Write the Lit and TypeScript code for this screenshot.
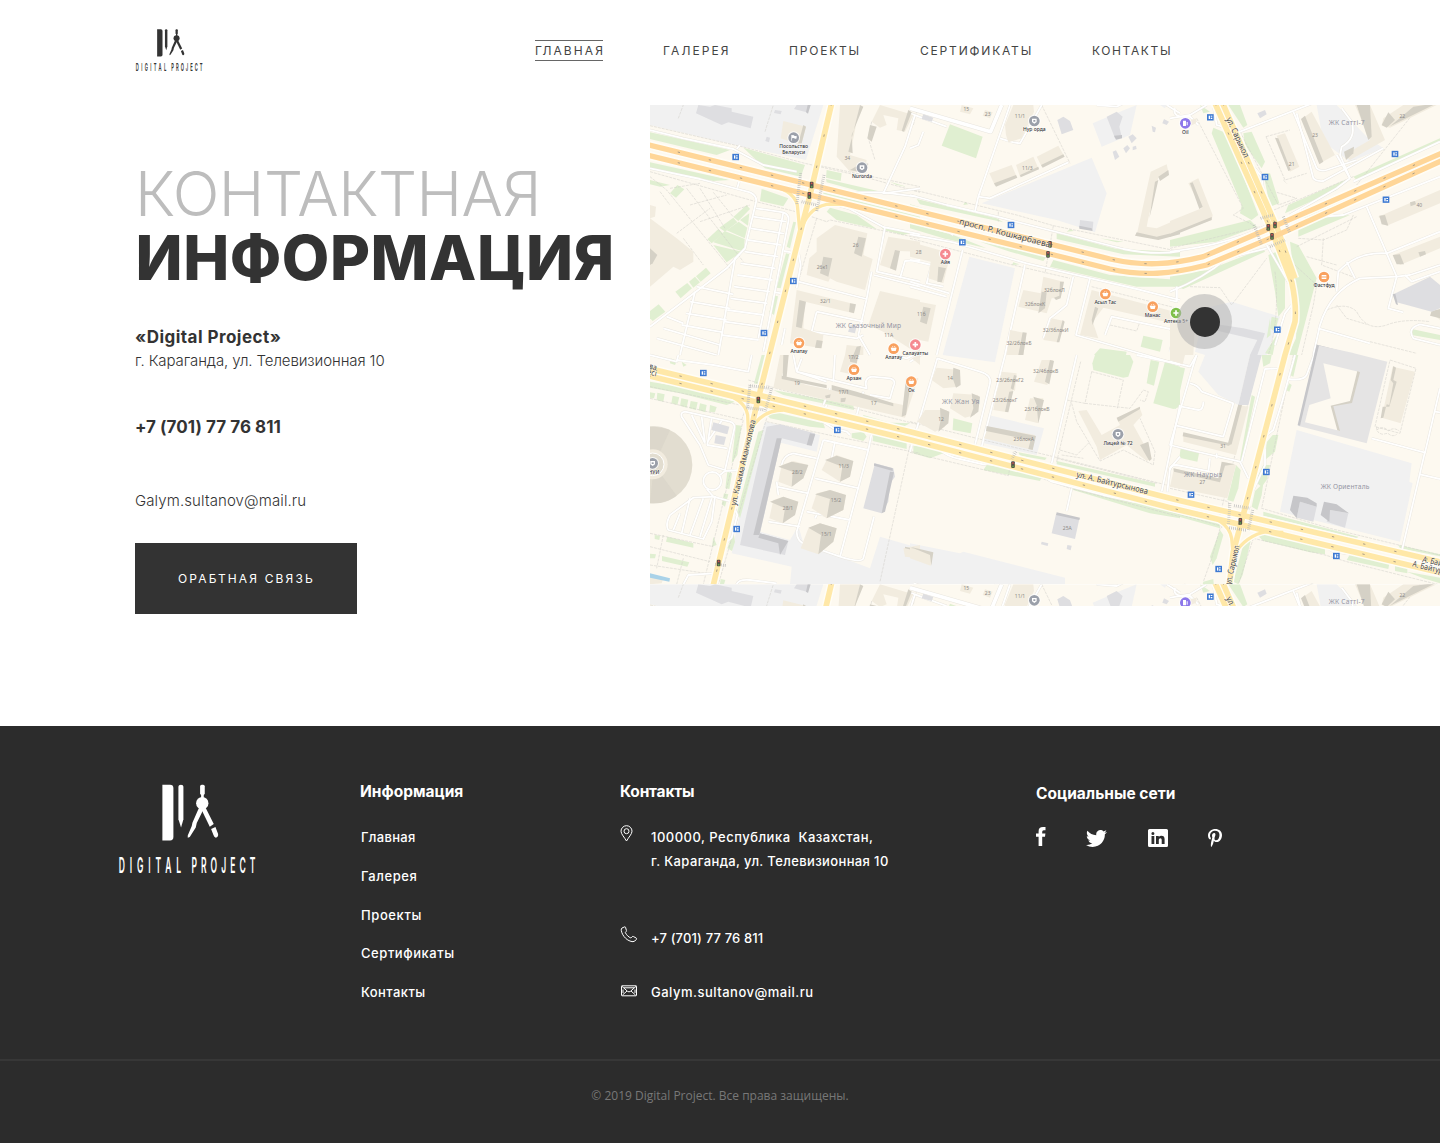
import { LitElement, html, svg, css } from "lit";
import { customElement, property } from "lit/decorators.js";

/* Map geometry is in thirds of a CSS pixel; it is split into six blocks of 780 x 750 units. */
type Block = {
  x: number; y: number;
  zones?: string[]; greens?: string[]; ways?: string[]; wide?: string[]; paths?: string[];
  floors?: string[]; shades?: string[]; greys?: string[]; greyShades?: string[];
};

const BLOCKS: Block[] = [
  {
    x: 0, y: 0,
    zones: ["0,0 520,0 468,165 280,125 0,60"],
    greens: [
      "0,82 240,135 200,150 0,102", "0,172 240,225 190,228 0,190", "280,128 465,180 452,215 345,190",
      "335,252 415,280 400,304 330,288", "530,195 575,205 572,228 528,218", "528,222 700,262 640,262 530,232",
      "540,308 620,330 680,372 560,345 530,320", "430,350 438,352 420,430 410,425", "408,445 418,448 392,550 380,548",
      "375,572 384,574 372,630 358,620", "0,225 60,240 30,245 0,238", "82,240 103,253 78,278 60,265",
      "290,300 300,312 265,348 250,336", "250,338 262,352 225,380 208,368", "205,372 220,386 185,415 172,403",
      "298,325 294,362 270,345", "266,350 292,368 284,400 230,376", "224,378 284,402 282,440 190,412",
      "190,420 276,440 230,472", "168,488 182,505 152,530 138,514", "135,515 150,532 130,548 117,530",
      "112,534 126,550 92,580 76,560", "26,598 46,620 8,648 0,640 0,618",
      "520,262 810,335 810,350 520,275", "720,230 770,245 740,240", "690,360 780,385 760,390 700,375",
    ],
    ways: [
      "M0,75 L100,100 L250,132 L340,180 L440,200", "M0,190 L150,222 L300,262 Q322,272 318,292 L285,430 L230,490 L0,665",
      "M262,248 L270,222", "M260,132 L270,120", "M318,310 L400,322 Q420,330 415,350 L340,740",
      "M285,430 L255,460 L205,750", "M135,560 L90,750", "M400,322 L325,700",
      "M310,335 L408,350", "M302,370 L402,386", "M294,405 L394,420", "M284,440 L384,455", "M272,475 L376,490",
      "M262,510 L368,525", "M252,545 L360,560", "M242,580 L352,595", "M232,615 L342,630", "M224,650 L334,665",
      "M214,690 L326,705", "M140,545 L250,568", "M120,590 L240,610", "M108,625 L230,645", "M95,660 L220,682", "M50,635 L100,655",
      "M40,670 L210,720", "M20,700 L200,750", "M795,30 L765,125 L700,265 L810,250", "M600,262 L700,262 L800,275",
      "M560,300 L600,312 L700,366 L810,388", "M705,366 L680,500 L810,530", "M672,510 L810,545",
      "M445,530 L650,582 L665,500", "M445,440 L452,480 L440,550", "M650,582 L625,690 L660,750", "M500,620 L640,650 M500,620 L485,680 L620,700 L640,690",
      "M750,520 L765,468 L810,465", "M405,670 L395,720", "M375,562 L400,566", "M402,438 L425,442",
    ],
    paths: [
      "M0,62 L280,126 L465,175 L640,215 L810,262", "M0,200 L318,290 L430,318 L500,340 L530,350", "M500,180 L810,245", "M500,340 L445,530",
      "M0,215 L50,255 L240,490", "M60,250 L150,235", "M110,250 L280,470", "M150,250 L225,370", "M190,262 L250,336",
      "M120,300 L230,270", "M150,350 L300,300", "M80,385 L180,310", "M30,260 L60,300", "M100,400 L160,480", "M665,50 L655,100 L675,165", "M345,80 L370,0", "M85,40 L100,0",
      "M530,350 L540,345 L810,400",
    ],
    floors: [
      "400,48 468,65 455,115 445,118 392,100", "570,0 630,0 600,150 650,165 645,200 600,200 560,155", "690,0 790,30 765,80 740,75 745,40 700,30 710,60 690,68 665,50",
      "0,300 18,305 15,335 0,340", "0,340 80,400 130,440 130,470 90,495 70,485 0,545",
      "500,400 555,360 652,385 640,450 668,462 645,555 560,530 540,520 535,530 470,510 478,460 500,440", "715,395 810,410 810,440 745,438 735,495 690,480",
      "440,555 615,598 610,625 465,590 460,670 520,690 515,730 420,715", "690,558 810,585 810,750 700,680 655,660", "590,720 640,725 640,750 585,750",
    ],
    shades: [
      "625,395 648,400 635,455 612,445", "520,455 547,460 535,515 510,505", "735,435 750,438 738,497 720,490", "448,585 468,590 455,670 438,665",
      "600,595 618,598 612,625 597,620", "460,60 468,65 455,115 445,115", "660,60 680,65 665,110 652,100", "630,0 640,5 605,90 608,145 595,140",
      "640,172 655,176 648,205 600,195", "500,705 518,708 514,730 495,728", "0,430 22,450 8,475 0,480", "775,15 785,22 762,80 755,78", "620,725 633,722 628,750 610,750",
    ],
    greys: ["145,0 180,5 195,0 245,10 245,20 310,35 302,70 235,52 215,60 138,25", "375,15 395,18 392,28 372,24", "440,0 480,0 470,22 432,12", "350,95 360,98 357,112 346,108", "602,660 620,662 615,685 594,680"],
    greyShades: ["473,0 482,0 474,26 468,22"],
  },
  {
    x: 780, y: 0,
    zones: ["545,158 590,265 555,382 440,345 215,295", "630,20 680,0 660,90 575,125 548,55", "178,455 315,490 255,772 98,750", "750,0 770,0 765,10"],
    greens: [
      "120,58 218,95 198,160 95,122", "20,282 260,340 280,352 30,298", "0,298 160,345 100,335 0,310", "0,355 130,390 230,430 100,400 0,370",
      "440,385 620,432 810,440 810,455 640,448 440,402", "430,465 600,510 810,525 810,545 680,545 420,485", "165,290 175,298 160,300", "480,372 492,378 470,380",
      "310,472 328,478 306,480", "700,692 758,705 750,740 692,725", "570,730 650,740 648,750 552,750", "210,410 410,455 400,468 300,440", "570,400 640,410 620,412", "780,412 810,402 810,420",
    ],
    ways: [
      "M0,270 L110,300 L260,335 L640,432 Q740,452 810,438", "M0,388 L130,412 L210,435 L350,475 L520,515 L680,552 L810,585", "M20,345 L80,360 L130,390",
      "M195,320 L205,275 L300,0", "M205,275 L240,280 L475,172", "M0,25 L110,65", "M0,130 L25,120 L40,80", "M270,100 L310,112 L330,115 L395,0",
      "M158,435 L80,750", "M0,530 L118,565", "M55,440 L120,450", "M0,545 L110,575", "M0,465 L65,480 L50,535 L100,545", "M345,480 L285,750", "M490,515 L470,600 Q440,625 420,640 L400,700",
      "M540,520 L498,690 L810,780", "M585,690 L605,635 L795,675 L785,750", "M800,545 L800,590", "M560,0 L620,5 L650,-10", "M770,0 L810,25",
    ],
    wide: ["M0,10 L242,80 L275,0"],
    paths: [
      "M0,252 L320,330 L430,362 L810,440", "M395,0 L480,175", "M0,400 L300,478 L480,520", "M545,545 L810,612", "M430,362 L405,505",
      "M600,660 L680,678 L690,650", "M265,320 L265,350", "M10,60 L20,20",
    ],
    floors: [
      "310,0 370,0 372,20 335,100 295,112 288,90 285,60", "238,205 305,180 320,215 255,242", "318,180 370,155 385,190 330,215", "380,155 445,122 462,152 395,185", "155,0 190,10 180,28 150,20", "225,15 248,22 240,40 218,32",
      "722,200 770,178 775,200 745,218 715,340 710,365 740,370 810,340 810,385 745,402 680,390", "0,410 122,445 100,535 55,520 62,470 0,455",
      "400,515 460,530 450,580 425,580 410,625 325,605 340,555 392,565", "425,640 462,648 445,712 400,705", "300,675 350,685 340,750 290,750",
      "545,555 810,625 810,660 580,608 548,650 565,700 510,690", "0,585 78,600 55,710 0,700",
    ],
    shades: [
      "252,235 318,210 322,218 258,245", "330,210 385,185 387,193 332,217", "393,180 460,148 464,155 398,188", "775,195 777,210 750,228 745,215", "718,340 728,300 745,225 735,230",
      "680,382 740,395 810,378 810,388 745,405 675,392", "462,530 452,580 438,585 432,578 448,572 450,530", "395,560 410,562 405,610 385,625", "458,645 464,650 448,712 440,712", "350,683 340,750 325,750 338,682",
      "555,605 565,610 548,660 545,645", "40,605 62,610 50,658 30,650", "85,485 108,490 95,532 82,530",
    ],
    greys: ["40,28 70,38 65,50 35,42", "590,35 620,20 638,35 628,65 635,95 615,100", "460,35 480,48 490,75 455,88 442,45", "725,62 738,68 735,82 728,80", "762,42 777,50 770,60 757,55", "655,95 668,88 680,100 665,115", "640,130 652,120 660,130 648,145", "608,140 618,136 628,155 615,165", "668,125 678,122 680,132 668,136", "510,345 550,350 548,375 508,368"],
    greyShades: ["508,362 545,370 548,378 508,371", "612,92 636,90 636,100 618,104"],
  },
  {
    x: 1560, y: 0,
    zones: ["440,0 500,0 590,95 640,130 540,170 460,110", "185,590 330,635 290,750 105,750 75,740 105,610"],
    greens: [
      "130,68 170,85 265,330 245,345 210,325 215,300 125,85", "175,0 210,0 232,60 220,68", "220,85 245,80 285,170 275,190 225,120", "280,205 300,205 328,295 300,305",
      "0,405 240,345 260,365 140,410 0,425", "525,225 500,255 345,325 355,300", "550,215 810,100 810,108 560,225", "385,370 440,340 540,330 385,395",
      "360,410 385,420 440,520 380,750 355,750 378,700 382,600", "295,450 320,440 345,520 345,610 325,635 315,560", "0,540 280,430 285,440 40,552", "305,635 325,640 315,680 300,670", "320,690 308,750 285,745",
      "725,672 810,690 810,705 725,690", "0,505 120,495 60,525 0,530", "90,0 120,20 100,25", "400,335 550,270 560,278 410,345", "300,640 302,690 290,700",
    ],
    ways: [
      "M0,440 Q200,415 310,350", "M0,560 Q100,520 170,460 L290,430", "M0,40 L60,30 L110,0", "M15,10 Q5,40 60,35 L85,60", "M130,0 L140,60 L210,80 L440,-10", "M370,20 L440,190 Q450,200 470,195 L560,165",
      "M380,25 L430,220 Q440,230 460,228 L640,130", "M515,10 L545,50 Q560,100 515,125 L510,150 L540,220", "M540,220 L500,250 L360,330", "M550,230 L810,110", "M460,335 L520,330 L810,215", "M250,185 L275,215 L285,300",
      "M590,305 L680,515 L655,610 L700,622", "M810,380 L650,445 Q560,440 505,500 L500,560", "M430,750 L450,660 Q480,560 570,520 L680,515 L720,510 L810,480", "M530,470 L555,520", "M705,510 L725,530 L810,500", "M500,150 L540,220",
      "M810,670 L750,658 Q710,670 730,700 L810,720", "M445,670 L600,715", "M365,600 L345,625 L315,720", "M20,545 L20,590 L0,585", "M0,670 L12,690 L0,740", "M290,420 L360,540",
    ],
    paths: [
      "M80,40 L220,310 L190,330 L250,360", "M210,80 L325,300 L380,280 L320,262", "M288,95 L360,75 M288,95 L345,225 L410,205 M340,225 L350,235", "M60,545 L150,548 L185,600 L290,460", "M385,400 L460,405 L530,375 L550,330", "M460,400 L455,480 L560,520", "M410,455 L500,480", "M470,615 Q530,590 560,620 Q590,680 650,660 Q700,640 780,650",
      "M500,600 L530,640 L590,658", "M600,710 L740,745", "M320,430 L440,540 L430,600 L395,750", "M315,500 Q330,640 295,750", "M300,320 L550,215 M380,425 L560,335", "M0,430 L270,365", "M750,0 L560,240",
    ],
    floors: [
      "320,92 345,85 388,185 360,200", "395,42 425,20 495,150 450,175", "520,0 600,0 645,105 540,165 522,150 600,105 555,0", "640,40 700,0 800,0 660,68 635,62", "55,235 85,220 128,330 125,345 0,390 0,348 95,310", "625,335 810,255 810,295 650,362",
      "670,450 810,395 810,430 690,480", "60,45 80,40 78,55 62,62", "0,640 75,655 70,750 0,750", "780,620 810,620 810,645",
    ],
    shades: [
      "393,42 405,32 460,170 448,178", "560,0 600,0 605,95 595,105", "522,140 552,125 550,145 528,165", "655,22 675,45 650,68 635,60", "60,235 68,232 98,305 88,312", "0,386 125,336 125,345 0,395", "315,98 325,100 362,195 355,198", "628,332 645,330 655,362 635,358",
      "668,450 690,448 702,478 680,478", "720,292 735,288 738,298 722,304", "745,442 765,438 768,448 750,455", "785,618 810,612 810,640 780,632", "730,5 800,-5 660,64",
    ],
    greys: ["262,25 285,15 290,28 270,40", "670,568 780,515 810,540 810,610 785,620 680,592", "90,650 220,670 285,685 262,750 240,750 262,705 90,665", "445,722 540,750 440,750"],
    greyShades: ["668,568 676,566 684,600 678,598", "445,720 540,745 530,750 438,730"],
  },
  {
    x: 0, y: 750,
    zones: ["345,200 510,240 500,290 380,260 330,530 420,555 445,512 460,565 660,640 690,545 810,580 810,688 420,688 425,635 245,595 300,330"],
    greens: [
      "335,0 355,0 330,90 312,85", "0,80 110,98 255,140 230,150 90,115 0,98", "62,10 80,18 75,30 60,25", "370,105 610,150 612,165 400,120", "350,178 390,175 520,205 525,220 480,215 360,190", "605,235 640,230 650,245 640,258 605,248", "670,235 770,258 770,282 668,258",
      "258,210 275,212 262,300 245,325", "232,350 246,355 238,402 226,400", "222,415 235,418 225,455 215,448", "325,230 340,225 270,490 262,470", "52,545 130,565 130,578 48,560", "36,603 118,622 112,635 36,618", "190,545 200,570 186,575", "250,530 255,560 246,588 232,580", "0,596 18,598 15,610 0,610", "14,540 30,542 28,555 14,552",
      "0,112 16,115 12,130 0,128", "22,113 44,118 40,140 20,135", "68,122 88,127 82,150 64,145", "94,130 115,134 110,158 90,152", "122,138 143,142 138,165 118,160", "150,145 170,150 166,172 146,166", "180,150 200,156 195,172 178,170", "638,200 780,205 760,215 640,180", "95,20 110,30 100,35", "212,672 226,675 222,688 210,688",
    ],
    ways: [
      "M105,170 L240,200 Q258,205 252,225 L225,345 L175,330 L150,270 L95,185 Q90,172 105,170", "M125,180 L165,265 M155,185 L165,262 M185,190 L172,270 L232,280 M215,197 L172,262", "M225,348 L268,345", "M60,480 Q45,510 55,525 L160,552 L185,500 L195,425 L130,428 L60,480", "M90,475 L70,525 M120,430 L95,535 M160,430 L120,540 M185,430 L150,545",
      "M160,378 A26,26 0 1 0 214,378 A26,26 0 1 0 160,378", "M210,360 L225,348 M170,402 L190,425 L245,440", "M250,450 L262,480 L245,548 L220,570", "M395,330 Q400,300 430,295 L500,310", "M520,255 L655,285 L665,235", "M520,255 L440,530 Q440,560 470,570 L570,605 Q635,625 640,610 L672,485",
      "M495,370 L628,400 M470,470 L600,495 M555,260 L545,310 M655,285 L570,605", "M380,395 L475,415 M355,500 L450,515", "M495,490 L500,480", "M380,380 L385,420", "M430,0 L440,50 L650,100 Q640,70 665,65 L720,70 Q740,75 730,95 L720,130 L660,120 M455,10 L440,50 L530,80", "M305,0 L295,50 L190,30 L80,15", "M520,150 L540,100 M620,180 L640,110", "M555,0 L550,80 M730,0 L770,10 L810,-10", "M100,688 L115,660 L190,655", "M260,688 Q265,672 300,675 L380,685", "M0,0 L80,20 L85,0",
      "M510,195 L550,220 L590,230 L600,240", "M520,170 L530,150",
    ],
    paths: [
      "M0,130 L280,195 L220,440 L160,688", "M350,200 L560,245 L660,265 L810,295", "M0,535 L190,575 M0,575 L180,620 M0,630 L200,660 M40,540 L20,640", "M350,190 L205,688", "M295,75 L395,105 L810,210", "M782,260 L690,680", "M0,95 L270,150", "M275,195 L290,150 M80,688 L100,610",
    ],
    floors: [
      "390,0 415,0 395,65 470,90 760,150 770,65 805,70 765,188 370,98", "395,330 430,318 475,330 460,370 425,395 385,380", "370,435 400,425 445,440 435,480 398,505 358,490", "530,315 560,300 610,318 600,365 570,380 515,345", "500,415 540,405 588,420 580,465 530,490 485,460", "475,520 510,505 560,520 550,560 505,598 452,580", "760,580 810,570 810,610 765,605", "585,0 625,0 615,60 570,50", "0,660 40,670 35,685 0,688", "785,10 810,0 810,30",
    ],
    shades: [
      "400,0 416,0 410,65 398,70", "395,62 530,90 530,100 395,72", "545,90 620,110 730,145 730,154 545,105", "768,70 785,68 768,180 755,185", "525,122 542,118 540,128 528,130", "572,130 588,128 585,140 572,142",
      "385,335 425,320 475,330 460,370 425,395 428,350", "360,440 400,425 445,440 435,480 398,505 405,460", "525,315 560,302 610,318 600,365 570,380 577,335", "495,418 540,405 588,420 580,465 530,490 540,432", "475,518 510,505 560,520 550,560 505,598 513,540", "765,575 810,585 810,590 765,580", "600,0 625,0 620,25 600,20",
    ],
    greys: [
      "350,215 390,208 495,235 485,272 395,250 330,535 415,558 405,600 270,570 285,500", "675,325 730,340 735,365 720,385 715,440 695,475 640,460", "190,202 238,215 232,238 184,225", "197,240 228,246 222,270 193,265", "440,688 480,692 475,712 432,706",
    ],
    greyShades: ["380,250 395,250 328,540 310,540", "480,235 496,238 485,272 470,270", "330,535 415,558 390,600 385,565 325,548", "672,325 728,340 728,348 672,332", "720,350 732,352 712,440 705,470 695,475"],
  },
  {
    x: 780, y: 750,
    zones: ["235,180 402,220 380,300 222,265", "0,565 150,595 160,590 465,668 465,688 0,688"],
    greens: [
      "555,0 660,0 670,20 655,65 640,68 550,45 547,25", "722,15 748,20 732,92 710,85", "765,20 810,35 810,155 790,162 730,145", "130,190 187,205 182,235 128,225", "10,272 80,280 100,295 60,310 10,295", "325,292 410,308 405,315 330,302", "230,330 300,340 395,365 390,378 220,345", "440,318 735,385 735,395 440,328", "490,388 680,440 810,465 810,490 720,475 480,402", "118,688 140,690 135,700",
    ],
    ways: [
      "M0,290 L82,10 L210,50 Q245,60 240,85 L195,270", "M285,0 L215,275", "M500,0 L425,325", "M0,20 L40,-5", "M85,280 Q110,305 150,312 L220,328 L255,322", "M395,360 L425,380 L580,420 L670,440 L700,435", "M485,400 L470,468", "M810,150 L755,410", "M680,0 L810,28", "M810,305 L780,340 L772,410",
    ],
    wide: ["M10,688 L165,745", "M260,688 L240,753 M305,688 L285,753"],
    paths: [
      "M0,200 L240,260 L410,300 L810,400", "M0,292 L295,362 L310,290", "M310,340 L480,400 L810,485", "M545,50 L525,145 L470,135 M545,50 L640,75 L622,160 M525,145 L660,160 L700,105 L715,110 L705,140 L690,135", "M485,145 L500,200 L570,318 L640,285 L730,330 L735,290 L690,190", "M450,285 L500,300 L540,260 M455,300 L520,310", "M512,20 L440,320", "M440,310 L740,385",
    ],
    floors: [
      "80,38 148,45 145,95 100,100 65,75", "130,115 205,120 195,180 165,188 120,160", "45,165 110,165 105,215 75,230 22,200", "235,215 375,240 368,285 222,250", "275,50 320,55 315,108 310,105 292,172 250,165 260,110 265,95", "395,15 430,15 412,90 372,80", "360,130 400,130 385,205 345,195",
      "505,168 530,165 575,240 630,210 620,190 688,155 697,180 670,210 725,310 710,318 650,270 570,315 560,275", "0,578 70,595 62,632 0,610",
    ],
    shades: ["130,38 150,45 152,90 138,98 128,70", "185,115 210,125 205,170 180,188 190,160", "90,158 118,170 115,205 85,230 92,195", "230,213 378,243 368,285 355,282 362,255 228,228", "0,575 70,592 64,632 60,600", "312,60 320,62 310,105 302,100", "298,110 310,108 295,172 285,170", "420,15 432,18 418,88 405,80", "370,125 402,135 385,205 380,150", "715,260 725,312 718,318 690,270", "620,188 690,155 690,162 625,200"],
    greys: ["438,478 508,492 495,552 425,535", "395,560 415,565 413,573 393,568", "472,570 485,572 482,586 470,582"],
    greyShades: ["440,472 510,488 508,495 438,480"],
  },
  {
    x: 1560, y: 750,
    zones: ["105,0 240,0 205,150 145,120 85,50", "380,225 725,325 718,380 728,385 690,560 330,470"],
    greens: [
      "0,30 45,40 18,162 0,155", "32,280 88,290 82,320 28,308", "275,0 305,0 300,25 280,35", "290,262 308,240 325,240 315,290 285,315", "198,330 212,345 205,400 190,440 172,435", "280,330 300,330 290,375 275,395 255,380", "255,408 280,385 275,420 262,465 245,455", "280,470 565,545 560,550 280,482", "262,540 300,540 465,575 465,598 420,592 280,558", "540,598 658,625 655,642 530,615", "675,632 712,640 712,655 675,648", "710,650 810,668 810,685 760,670",
      "0,455 90,482 150,505 150,520 0,478", "150,525 160,540 140,610 128,630 120,605", "245,545 225,550 190,680 205,688 218,660", "100,680 130,672 132,700 95,700", "372,0 385,0 370,65 360,60", "358,85 365,90 358,110 348,105", "245,120 255,125 215,320 210,315", "685,570 810,598 810,604 690,580", "190,690 220,710 235,753 205,753",
    ],
    ways: [
      "M80,0 L70,30 L0,270 L60,285 L210,320 L235,370", "M60,85 Q85,90 95,110 L190,145 L160,245 L20,212", "M35,155 L85,165 Q100,165 100,140", "M325,40 L285,42 L215,320", "M375,0 L335,145 L310,225 L285,245", "M432,0 L410,60 Q400,78 355,72", "M285,280 L285,330 L250,405 L215,455", "M605,250 L765,293 L810,100", "M765,290 L695,590", "M750,358 L810,372", "M0,20 L60,35 L80,0", "M120,310 L115,350", "M0,345 Q0,330 20,330 L120,350", "M450,565 L490,590 L550,598", "M140,295 L140,310", "M795,170 L810,172",
      "M0,700 L45,690 L85,750", "M260,750 L430,688",
    ],
    paths: [
      "M660,15 L738,40 L690,235 L615,215 L660,15", "M620,215 Q618,235 640,238 Q655,232 660,240 Q672,245 680,238 M620,225 Q640,210 655,228 Q670,215 688,228", "M0,400 L175,440 L180,500 L150,520 L125,610 L100,680", "M270,0 L150,480", "M370,0 L275,460 L480,520 L810,600", "M250,550 L465,600 L530,620 L810,690", "M250,550 L205,688", "M0,470 L160,515",
      "M360,510 L560,548",
    ],
    floors: ["205,150 235,155 198,300 40,260 40,235 175,268", "668,35 735,50 692,205 635,188", "12,340 145,375 160,320 198,330 172,430 0,395", "0,0 45,0 38,28 0,15", "400,720 430,700 455,753 400,753", "520,690 630,690 645,720 610,750 560,753", "650,740 690,700 800,688 800,700 700,750"],
    shades: ["205,148 216,150 185,268 172,272", "40,232 178,264 178,272 38,244", "670,33 678,38 670,75 680,80 658,155 638,155 632,190 640,188 650,148 658,150 670,85 662,75", "10,340 145,370 155,320 195,328 165,332 150,382 12,350", "395,735 420,715 430,753 395,753", "520,690 565,688 605,750 575,753", "635,745 665,715 680,740 660,753"],
    greys: ["390,440 440,455 430,500 380,488", "480,465 535,475 525,518 470,500", "240,0 275,0 235,150 205,150", "262,715 285,705 288,718 268,728"],
    greyShades: ["370,422 412,428 440,445 440,455 390,440 380,490 360,465", "462,440 500,448 537,475 480,465 478,500 452,480"],
  },
];

const EXPRESS = ["M-10,118 L1180,412 L1380,462 C1480,484 1560,480 1660,455 L1840,378 L2380,142", "M-10,150 L1200,447 L1380,492 C1480,514 1560,508 1670,480 L1860,400 L2380,165"];
const AVENUES = [
  "M545,-5 L480,270 L450,385 L325,880 L190,1440", "M-5,790 L780,980 L1560,1180 L2375,1372", "M-5,812 L780,1004 L1560,1208 L2375,1404",
  "M1695,-5 L1862,370 L1925,530 Q1940,600 1935,650 L1905,750 L1785,1210 L1750,1340 L1738,1440", "M1718,-5 L1882,370 L1935,520",
];
const SLIPS = ["M340,238 Q430,250 442,300 L450,385", "M450,385 Q470,310 530,298 L580,298", "M200,860 Q285,880 293,930 L296,1000", "M296,985 Q330,915 400,915", "M1640,1225 Q1735,1240 1745,1300 L1750,1350", "M1750,1350 Q1790,1290 1850,1280 L1900,1282"];
const CROSSINGS = [
  "M452,205 L440,300", "M522,210 L500,320", "M455,290 L500,300", "M300,840 L292,910", "M365,850 L345,920", "M300,842 L360,850", "M290,908 L340,914",
  "M1812,360 L1835,420", "M1900,335 L1920,385", "M1832,340 L1870,330", "M1860,425 L1905,405", "M1740,1195 L1735,1260", "M1808,1215 L1795,1275",
  "M1752,1202 L1800,1210", "M1738,1268 L1790,1276", "M1098,1040 L1086,1062", "M195,1378 L230,1382",
];

const STOPS = [[257, 156], [430, 528], [342, 684], [1083, 360], [937, 412], [1681, 37], [1845, 216], [2235, 147], [2208, 284], [1882, 674], [160, 804], [562, 975], [260, 1272], [1623, 1169], [1849, 1101], [1706, 1392], [2059, 1353]];
const LIGHTS = [[485, 240], [478, 271], [1200, 418], [1194, 448], [1855, 367], [1875, 360], [1866, 394], [325, 885], [206, 1374], [1089, 1079], [1771, 1249]];
const PLACES: [number, number, string, string, string?][] = [
  [431, 98, "flag", "Посольство", "Беларуси"], [636, 188, "org", "Nurorda"], [1153, 48, "org", "Нур орда"], [1404, 988, "org", "Лицей № 72"], [8, 1075, "org", "зНУИ"],
  [1606, 55, "fuel", "Oil"], [447, 714, "food", "Апатау"], [731, 731, "food", "Алатау"], [796, 719, "med", "Салауатты"], [886, 447, "med", "Айя"],
  [1366, 567, "food", "Асыл Тас"], [1508, 605, "food", "Манас"], [1578, 624, "park", "Аптека 5+"], [2022, 516, "cafe", "Фастфуд"], [612, 794, "food", "Арзан"], [784, 830, "food", "Ок"],
];
const NUMBERS: [number, number, string][] = [
  [592, 164, "34"], [617, 425, "26"], [517, 491, "26к1"], [806, 446, "28"], [526, 595, "32/1"], [716, 695, "11А"], [814, 634, "11б"], [949, 18, "15"], [1013, 32, "23"], [1110, 40, "11/1"], [1132, 194, "11/3"],
  [1213, 562, "32блокЛ"], [1155, 604, "32блокК"], [1217, 682, "32/3блокИ"], [1107, 720, "32/2блокБ"], [1995, 95, "23"], [1925, 183, "21"], [2257, 38, "22"], [2308, 307, "40"], [610, 762, "17/2"], [441, 840, "19"], [581, 868, "17/1"], [671, 899, "17"],
  [442, 1107, "28/2"], [414, 1215, "28/1"], [581, 1088, "11/3"], [558, 1191, "15/2"], [529, 1293, "15/1"], [900, 825, "14"], [873, 947, "12"], [1187, 803, "32/4блокВ"], [1080, 831, "23/2блокГ2"], [1065, 890, "23/2блокГ"], [1161, 918, "23/1блокВ"], [1121, 1007, "23блокА"], [1252, 1274, "25А"], [1719, 1028, "31"], [1657, 1137, "27"],
];
const ESTATES: [number, number, string, number][] = [[655, 668, "ЖК Сказочный Мир", 196], [2090, 59, "ЖК Сатті-7", 108], [932, 898, "ЖК Жан Уя", 112], [1659, 1117, "ЖК Наурыз", 114], [2085, 1151, "ЖК Ориенталь", 146]];
const STREETS: [number, number, number, number, string][] = [
  [926, 357, 14.5, 282, "просп. Р. Кошкарбаева"], [1728, 42, 65, 130, "ул. Сарыкол"], [258, 1202, -77, 262, "ул. Касыма Аманжолова"], [1278, 1116, 13.5, 220, "ул. А. Байтурсынова"],
  [1742, 1440, -77, 120, "ул. Сарыкол"], [2316, 1370, 14, 166, "А. Байтурсынова"], [2286, 1384, 14, 166, "А. Байтурсынова"], [-118, 765, 13, 140, "Байтурсынова"], [-52, 798, 13, 72, "көшесі"],
];

const polys = (list: string[] | undefined, cls: string) => (list ?? []).map((p) => svg`<polygon class=${cls} points=${p}></polygon>`);
const lines = (list: string[] | undefined, cls: string) => (list ?? []).map((d) => svg`<path class=${cls} d=${d}></path>`);
const perBlock = (draw: (b: Block) => unknown) => BLOCKS.map((b) => svg`<g transform="translate(${b.x} ${b.y})">${draw(b)}</g>`);

const placeGlyph = (kind: string) => {
  switch (kind) {
    case "food": return svg`<path class="glyph" d="M-9,-3 H9 L6,7 H-6 Z"></path><path class="glyph-line" d="M-5,-3 L-2,-8 M5,-3 L2,-8"></path>`;
    case "cafe": return svg`<path class="glyph" d="M-7,-6 H7 V-2 H-7 Z M-7,2 H7 V6 H-7 Z M-8,-1 H8 V1 H-8 Z"></path>`;
    case "flag": return svg`<path class="glyph" d="M-7,-8 H-5 V9 H-7 Z M-5,-7 Q-1,-9 2,-6 Q5,-4 9,-6 V2 Q5,5 2,2 Q-1,0 -5,2 Z"></path>`;
    case "fuel": return svg`<path class="glyph" d="M-7,-8 H2 V8 H-7 Z M4,-4 H7 V6 H4 Z"></path>`;
    case "med":
    case "park": return svg`<path class="glyph" d="M-2.500,-8 H2.500 V-2.500 H8 V2.500 H2.500 V8 H-2.500 V2.500 H-8 V-2.500 H-2.500 Z"></path>`;
    default: return svg`<path class="glyph" d="M-7,-7 H7 V3 L0,8 L-7,3 Z"></path><path class="hole" d="M-3,-3 H3 V2 H-3 Z"></path>`;
  }
};

@customElement("city-map")
class CityMap extends LitElement {
  static styles = css`
    :host { display: block; position: relative; overflow: hidden; }
    svg { display: block; width: 100%; height: 100%; font-family: "Noto Sans", "Liberation Sans", sans-serif; }
    .land { fill: #fdf9f0; }
    .zone { fill: #f1f1f1; }
    .plaza { fill: #e5e4e4; }
    .green { fill: #e0efd1; }
    .floor { fill: #f2ecdf; }
    .shade { fill: #d5d1c6; }
    .soft { opacity: 0.5; }
    .grey { fill: #dedee1; }
    .grey-shade { fill: #c6c6c9; }
    .round { fill: #e2ddd0; }
    .dome { stroke: #fff; stroke-width: 3; }
    .pool { fill: #a9d2e8; }
    .way-edge, .way, .wide-edge, .wide, .footway, .edge, .express, .avenue, .slip, .slip-edge, .arrows, .crossing, .glyph-line { fill: none; stroke-linejoin: round; }
    .way-edge { stroke: #e9e6df; stroke-width: 8; }
    .way { stroke: #fff; stroke-width: 5.4; }
    .wide-edge { stroke: #e9e6df; stroke-width: 14; }
    .wide { stroke: #fff; stroke-width: 11; }
    .footway { stroke: #d2d0cb; stroke-width: 1.6; stroke-dasharray: 9 3; }
    .edge { stroke: #fffdf6; stroke-width: 26; }
    .express { stroke: #ffd698; stroke-width: 16; }
    .avenue { stroke: #ffe8a8; stroke-width: 17; }
    .slip-edge { stroke: #fffdf6; stroke-width: 17; }
    .slip { stroke: #ffe8a8; stroke-width: 10; }
    .arrows { stroke: #a89a84; stroke-width: 3; stroke-dasharray: 7 89; }
    .crossing { stroke: #b9b9b9; stroke-width: 9; stroke-dasharray: 2 4; }
    .stop { fill: #3d79d2; }
    .stop-mark { fill: #fff; }
    .light { fill: #55504a; }
    .red { fill: #d9534f; }
    .lime { fill: #5fae4b; }
    .ring { fill: #fff; opacity: 0.75; }
    .food, .cafe { fill: #f9a15f; }
    .med { fill: #f58a90; }
    .org, .flag { fill: #9ba0aa; }
    .fuel { fill: #8d78ea; }
    .park { fill: #7fc04b; }
    .glyph { fill: #fff; }
    .glyph-line { stroke: #fff; stroke-width: 2; }
    .hole { fill: #9ba0aa; }
    .text-place { font-size: 15px; font-weight: 500; fill: #333; stroke: #fff; stroke-width: 2; paint-order: stroke; text-anchor: middle; }
    .text-number { font-size: 15px; fill: #8d8a86; text-anchor: middle; }
    .text-estate { font-size: 20px; fill: #9495a3; text-anchor: middle; }
    .text-street { font-size: 25px; fill: #4a4a4a; stroke: #fff; stroke-width: 2.5; stroke-opacity: 0.7; paint-order: stroke; }
    .pin { position: absolute; left: 527px; top: 189px; width: 55px; height: 55px; border-radius: 50%; background: rgba(176, 176, 176, 0.55); display: grid; place-items: center; }
    .dot { width: 30px; height: 30px; border-radius: 50%; background: #333; }
  `;

  render() {
    return html`
      <svg viewBox="0 0 2370 1503" preserveAspectRatio="none">
        <defs><clipPath id="sheet"><rect width="2370" height="1438"></rect></clipPath></defs>
        <g id="tile" clip-path="url(#sheet)">
          <rect class="land" width="2370" height="1438"></rect>
          ${perBlock((b) => polys(b.zones, "zone"))}
          ${perBlock((b) => polys(b.greens, "green"))}
          ${perBlock((b) => lines(b.paths, "footway"))}
          ${perBlock((b) => [lines(b.ways, "way-edge"), lines(b.wide, "wide-edge")])}
          ${perBlock((b) => [lines(b.ways, "way"), lines(b.wide, "wide")])}
          ${perBlock((b) => [polys(b.floors, "floor"), polys(b.shades, "shade"), polys(b.greys, "grey"), polys(b.greyShades, "grey-shade")])}
          <polygon class="plaza" points="2000,720 2100,742 2212,770 2150,1015 1943,962"></polygon>
          <polygon class="grey-shade" points="2000,718 2007,722 1950,962 1943,960"></polygon>
          <polygon class="land" points="2020,775 2125,800 2102,892 2045,902 2068,977 1965,952 1978,900 2042,880"></polygon>
          <path class="shade" d="M2122,798 L2130,802 L2106,894 L2050,904 L2070,978 L2062,976 L2042,902 L2100,888 Z"></path>
          <circle class="round" cx="12" cy="1080" r="115"></circle>
          <path class="shade soft" d="M12,1080 L60,975 A115,115 0 0 0 -40,975 Z M12,1080 L80,1172 A115,115 0 0 1 0,1195 Z"></path>
          <circle class="floor" cx="8" cy="1078" r="45"></circle>
          <circle class="round dome" cx="8" cy="1078" r="34"></circle>
          <polygon class="pool" points="0,1405 60,1420 58,1430 0,1418"></polygon>
          ${lines(SLIPS, "slip-edge")}${lines(AVENUES, "edge")}${lines(EXPRESS, "edge")}
          ${lines(SLIPS, "slip")}${lines(AVENUES, "avenue")}${lines(EXPRESS, "express")}
          ${lines([...EXPRESS, ...AVENUES], "arrows")}
          ${lines(CROSSINGS, "crossing")}
          ${STOPS.map(([x, y]) => svg`<g transform="translate(${x} ${y})"><rect class="stop" x="-10" y="-9.500" width="20" height="19"></rect><rect class="stop-mark" x="-5" y="-5" width="4" height="10"></rect><rect class="stop-mark" x="1" y="-5" width="5" height="3"></rect><rect class="stop-mark" x="1" y="1" width="5" height="4"></rect></g>`)}
          ${LIGHTS.map(([x, y]) => svg`<g transform="translate(${x} ${y})"><rect class="light" x="-5.500" y="-10" width="11" height="20" rx="3"></rect><circle class="red" cy="-5" r="2.600"></circle><circle class="lime" cy="5" r="2.600"></circle></g>`)}
          ${NUMBERS.map(([x, y, t]) => svg`<text class="text-number" x=${x} y=${y}>${t}</text>`)}
          ${ESTATES.map(([x, y, t, w]) => svg`<text class="text-estate" x=${x} y=${y} textLength=${w}>${t}</text>`)}
          ${PLACES.map(([x, y, kind, a, b]) => svg`<g transform="translate(${x} ${y})"><circle class="ring" r="19"></circle><circle class=${kind} r="16"></circle>${placeGlyph(kind)}<text class="text-place" y="31">${a}</text>${b ? svg`<text class="text-place" y="49">${b}</text>` : ""}</g>`)}
          ${STREETS.map(([x, y, r, w, t]) => svg`<text class="text-street" transform="translate(${x} ${y}) rotate(${r})" textLength=${w} lengthAdjust="spacingAndGlyphs">${t}</text>`)}
        </g>
        <use href="#tile" y="1438"></use>
      </svg>
      <div class="pin"><div class="dot"></div></div>
    `;
  }
}

@customElement("brand-logo")
class BrandLogo extends LitElement {
  /* Baseline of the name in drawing units. */
  @property({ type: Number }) baseline = 308;

  static styles = css`
    :host { display: block; }
    svg { display: block; width: 100%; overflow: visible; fill: currentColor; }
    .name { font-family: Inter, "Liberation Sans", sans-serif; font-size: 64px; font-weight: 600; }
  `;

  render() {
    const word = (x: number, width: number, text: string) =>
      svg`<text class="name" transform="translate(${x} ${this.baseline}) scale(.4 1)" textLength=${width / 0.4}>${text}</text>`;
    return html`<svg viewBox="56 40 412 270">
      <path d="M186,42 H209 Q219,42 219,52 V199 Q219,209 209,209 H186 Z"></path>
      <path d="M234,48 Q234,42 241.500,42 Q249,42 249,48 V146 L242,170 L234,146 Z"></path>
      <rect x="299" y="42" width="14" height="31" rx="5"></rect>
      <rect x="302" y="70" width="8" height="14"></rect>
      <circle cx="305.500" cy="97.500" r="18.500"></circle>
      <path d="M297,108 L310,114 L289,157 L286,170 L268,199 L262,201 L262,194 L274,166 L276,156 Z"></path>
      <path d="M302,114 L314,108 L340,160 L328,168 Z"></path>
      <path d="M332,175 L345,169 L353,190 Q354,200 346,201 Q341,200 339,193 Z"></path>
      ${word(55, 187, "DIGITAL")}${word(273, 192, "PROJECT")}
    </svg>`;
  }
}

type Label = { text: string; tracking: number };
const MENU: Label[] = [
  { text: "ГЛАВНАЯ", tracking: 2.1 }, { text: "ГАЛЕРЕЯ", tracking: 2.1 }, { text: "ПРОЕКТЫ", tracking: 1.8 }, { text: "СЕРТИФИКАТЫ", tracking: 1.82 }, { text: "КОНТАКТЫ", tracking: 1.62 },
];
const LINKS: Label[] = [
  { text: "Главная", tracking: 0.32 }, { text: "Галерея", tracking: 0.62 }, { text: "Проекты", tracking: 0.6 }, { text: "Сертификаты", tracking: 0.56 }, { text: "Контакты", tracking: 0.42 },
];
const spaced = (cls: string, { text, tracking }: Label) => html`<a class=${cls} style="letter-spacing:${tracking}px">${text}</a>`;

@customElement("app-root")
class AppRoot extends LitElement {
  static styles = css`
    :host { display: block; width: 1440px; background: #fff; color: #333; font-family: Inter, "Liberation Sans", sans-serif; }
    * { box-sizing: border-box; }
    a { color: inherit; text-decoration: none; }
    span, a, h1, h2 { white-space: pre; }
    .header { display: flex; height: 105px; padding-left: 136px; }
    .header-logo { width: 67px; margin-top: 29px; }
    .nav { display: grid; grid-template-columns: 128px 126px 131px 172px auto; justify-items: start; height: 21px; margin: 40px 0 0 332px; font-size: 12px; line-height: 19px; color: #444; }
    .nav-link { height: 21px; padding: 1px 0; }
    .nav-link.active { width: 68px; border: solid #666; border-width: 1px 0; padding: 0; }
    .hero { display: grid; grid-template-columns: 650px 790px; height: 621px; align-items: start; }
    .map { height: 501px; }
    .intro { display: flex; flex-direction: column; align-items: flex-start; padding: 57px 0 0 135px; }
    .title { display: flex; flex-direction: column; margin: 0 0 35px; font-size: 61.5px; line-height: 64px; }
    .title-light { font-weight: 300; color: #bdbdbd; letter-spacing: -0.5px; }
    .title-bold { font-weight: 800; letter-spacing: 0.55px; padding-left: 0.5px; }
    .company, .phone { font-size: 17px; line-height: 24px; font-weight: 700; }
    .company { letter-spacing: 0.47px; }
    .phone { margin-top: 42px; letter-spacing: 0.05px; }
    .address, .mail { font-size: 15px; line-height: 24px; font-weight: 300; }
    .address { letter-spacing: -0.1px; }
    .mail { margin-top: 50px; letter-spacing: 0.11px; }
    .button { margin-top: 30px; width: 222px; height: 71px; padding-left: 43px; background: #333; color: #fff; font-size: 12px; line-height: 71px; letter-spacing: 2.15px; }
    .footer { background: #2c2c2c; color: #fff; height: 417px; }
    .columns { display: grid; grid-template-columns: 360px 260px 416px 1fr; height: 333px; padding-top: 53px; align-items: start; }
    .footer-logo { width: 137.5px; margin: 5px 0 0 119px; }
    .heading { margin: 0; font-size: 15.5px; line-height: 25px; height: 24px; font-weight: 700; }
    .heading.tight { letter-spacing: -0.2px; }
    .links { display: flex; flex-direction: column; align-items: flex-start; margin-top: 15px; padding-left: 1px; font-size: 13px; line-height: 38.8px; font-weight: 500; }
    .contact { display: grid; grid-template-columns: 31px auto; justify-items: start; font-size: 13px; line-height: 24px; font-weight: 500; letter-spacing: 0.5px; }
    .contact svg { display: block; fill: none; stroke: #fff; stroke-width: 1; stroke-linejoin: round; }
    .place { margin-top: 22px; }
    .call { margin-top: 53px; letter-spacing: 0.14px; }
    .write { margin-top: 30px; }
    .icon-mail { margin-top: 5px; }
    .lines { display: flex; flex-direction: column; }
    .second { letter-spacing: 0.37px; }
    .social { padding-top: 2px; }
    .networks { display: grid; grid-template-columns: 50px 62px 60px auto; align-items: end; justify-items: start; height: 21px; margin-top: 21px; }
    .networks svg { display: block; fill: #fff; }
    .facebook { margin-bottom: 1px; }
    .twitter { margin-bottom: 0.5px; }
    .legal { height: 84px; border-top: 2px solid #373737; padding-top: 25px; text-align: center; color: #787878; font: 12px/20px "Open Sans", "Noto Sans", sans-serif; }
  `;

  render() {
    return html`
      <header class="header">
        <brand-logo class="header-logo" .baseline=${296}></brand-logo>
        <nav class="nav">${MENU.map((item, i) => spaced(i ? "nav-link" : "nav-link active", item))}</nav>
      </header>
      <main class="hero">
        <section class="intro">
          <h1 class="title"><span class="title-light">КОНТАКТНАЯ</span><span class="title-bold">ИНФОРМАЦИЯ</span></h1>
          <span class="company">«Digital Project»</span>
          <span class="address">г. Караганда, ул. Телевизионная 10</span>
          <a class="phone">+7 (701) 77 76 811</a>
          <a class="mail">Galym.sultanov@mail.ru</a>
          <a class="button">ОРАБТНАЯ СВЯЗЬ</a>
        </section>
        <city-map class="map"></city-map>
      </main>
      <footer class="footer">
        <div class="columns">
          <brand-logo class="footer-logo"></brand-logo>
          <section>
            <h2 class="heading">Информация</h2>
            <nav class="links">${LINKS.map((item) => spaced("link", item))}</nav>
          </section>
          <section>
            <h2 class="heading tight">Контакты</h2>
            <div class="contact place">
              <svg width="13" height="17" viewBox="0 0 13 17"><path d="M6.500,16 C4.500,12.500 1,9 1,6.200 A5.500,5.500 0 0 1 12,6.200 C12,9 8.500,12.500 6.500,16 Z"></path><circle cx="6.500" cy="6.200" r="2.500"></circle></svg>
              <div class="lines"><span>100000, Республика  Казахстан,</span><span class="second">г. Караганда, ул. Телевизионная 10</span></div>
            </div>
            <div class="contact call">
              <svg width="18" height="17" viewBox="0 0 18 17"><path d="M4.800,.8 L2,2 Q1,2.800 1.300,4.600 C2.500,10.500 7.500,15.300 13,15.700 Q14.800,15.700 16.500,13.200 Q16.800,12.600 16.200,12 L13.300,10.500 Q12.600,10.200 12,10.800 L10.800,12 C8.500,11 6.500,9 5.300,6.600 L6.300,5.300 Q6.600,4.800 6.400,4.300 L5.500,1.300 Q5.300,.7 4.800,.8 Z"></path></svg>
              <span>+7 (701) 77 76 811</span>
            </div>
            <div class="contact write">
              <svg class="icon-mail" width="18" height="12" viewBox="0 0 18 12"><rect x="1.500" y=".8" width="15" height="10" rx=".5"></rect><path d="M1.800,1.200 L7.500,6.300 Q9,7.500 10.500,6.300 L16.200,1.200 M2.500,10 L7,6 M15.500,10 L11,6 M4,2.800 H14 M3,4.500 V8 M15,4.500 V8"></path></svg>
              <span>Galym.sultanov@mail.ru</span>
            </div>
          </section>
          <section class="social">
            <h2 class="heading">Социальные сети</h2>
            <div class="networks">
              <svg class="facebook" width="10" height="19" viewBox="0 0 10 19"><path d="M9.500,0 V3.300 H7.700 Q6.200,3.300 6.200,4.800 V6.500 H9.400 L9,9.700 H6.200 V19 H2.600 V9.700 H0 V6.500 H2.600 V4.200 Q2.600,0 7,0 Z"></path></svg>
              <svg class="twitter" width="21" height="17" viewBox="0 2.200 24 19.600" preserveAspectRatio="none"><path d="M23.953 4.570a10 10 0 01-2.825.775 4.958 4.958 0 002.163-2.723c-.951.555-2.005.959-3.127 1.184a4.920 4.920 0 00-8.384 4.482C7.690 8.095 4.067 6.130 1.640 3.162a4.822 4.822 0 00-.666 2.475c0 1.710.870 3.213 2.188 4.096a4.904 4.904 0 01-2.228-.616v.060a4.923 4.923 0 003.946 4.827 4.996 4.996 0 01-2.212.085 4.936 4.936 0 004.604 3.417 9.867 9.867 0 01-6.102 2.105c-.390 0-.779-.023-1.170-.067a13.995 13.995 0 007.557 2.209c9.053 0 13.998-7.496 13.998-13.985 0-.210 0-.420-.015-.630A9.935 9.935 0 0024 4.590z"></path></svg>
              <svg width="20" height="18" viewBox="0 0 20 18"><path fill-rule="evenodd" d="M1.500,0 H18.500 Q20,0 20,1.500 V16.500 Q20,18 18.500,18 H1.500 Q0,18 0,16.500 V1.500 Q0,0 1.500,0 Z M3.500,7 V15 H6.300 V7 Z M4.900,3 A1.500,1.500 0 1 0 4.900,6 A1.500,1.500 0 1 0 4.900,3 Z M8,7 V15 H10.800 V10.800 Q10.800,9.200 12.300,9.200 Q13.700,9.200 13.700,10.800 V15 H16.600 V10.200 Q16.600,6.800 13.400,6.800 Q11.600,6.800 10.800,8 V7 Z"></path></svg>
              <svg width="14" height="18" viewBox="0 6 384 500" preserveAspectRatio="none"><path d="M204 6.500C101.400 6.500 0 74.900 0 185.600 0 256 39.600 296 63.600 296c9.900 0 15.600-27.600 15.600-35.400 0-9.300-23.700-29.100-23.700-67.800 0-80.400 61.200-137.400 140.400-137.400 68.100 0 118.500 38.700 118.500 109.800 0 53.100-21.300 152.700-90.300 152.700-24.900 0-46.200-18-46.200-43.800 0-37.800 26.400-74.400 26.400-113.400 0-66.200-93.900-54.200-93.900 25.800 0 16.800 2.100 35.400 9.600 50.700-13.800 59.400-42 147.900-42 209.100 0 18.900 2.700 37.500 4.500 56.400 3.400 3.800 1.700 3.400 6.900 1.500 50.400-69 48.600-82.500 71.400-172.800 12.300 23.400 44.100 36 69.300 36 106.200 0 153.900-103.500 153.900-196.800C384 71.300 298.200 6.500 204 6.500z"></path></svg>
            </div>
          </section>
        </div>
        <div class="legal">© 2019 Digital Project. Все права защищены.</div>
      </footer>
    `;
  }
}
